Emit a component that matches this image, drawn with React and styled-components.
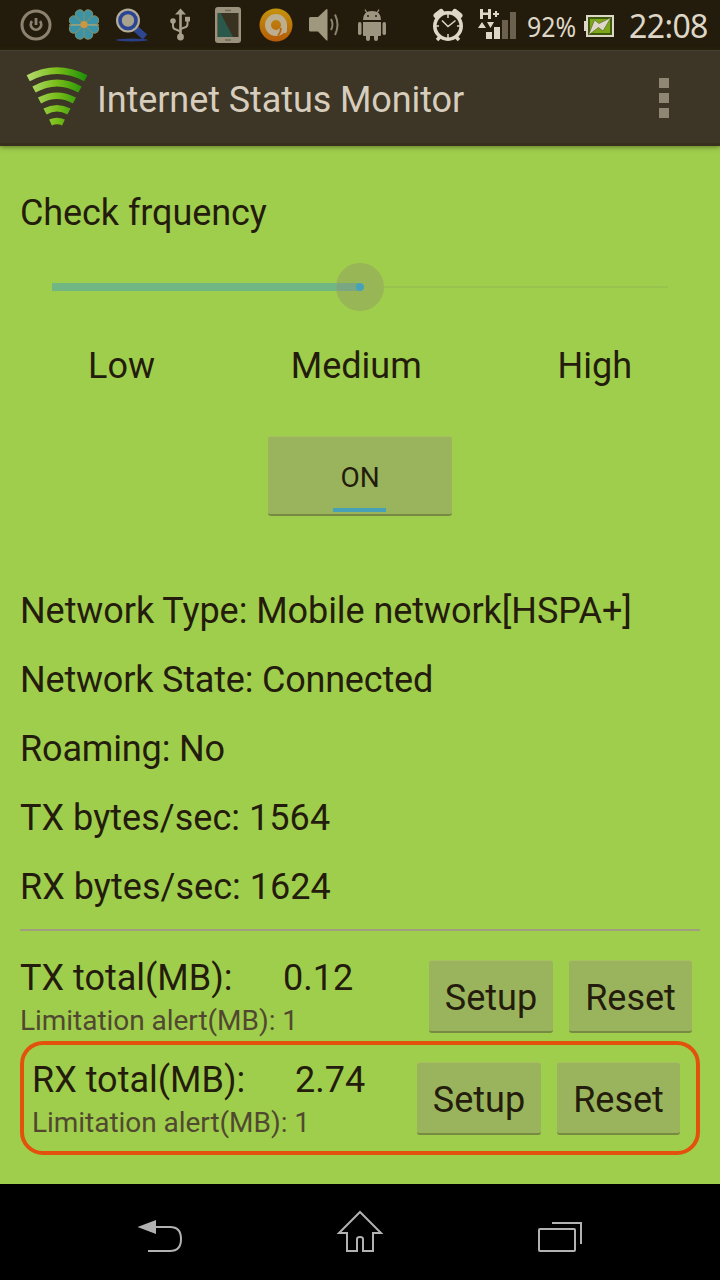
import React from 'react'
import styled, { createGlobalStyle } from 'styled-components'

const GlobalStyle = createGlobalStyle`
  * {
    box-sizing: border-box;
  }
  body {
    margin: 0;
    background: #9fce4d;
    font-family: Roboto, "Liberation Sans", sans-serif;
  }
`
const Screen = styled.div`
  display: flex;
  flex-direction: column;
  width: 720px;
  height: 1280px;
  overflow: hidden;
  background: #9fce4d;
  color: #241c0c;
`
const StatusBar = styled.header`
  display: flex;
  align-items: center;
  height: 50px;
  padding-left: 12px;
  background: #231c0c;
  color: #ded6c6;
`
const StatusSlot = styled.div`
  display: flex;
  justify-content: center;
  width: 48px;
`
const StatusRight = styled.div`
  display: flex;
  align-items: center;
  margin-left: 36px;
  font-family: "Noto Sans", "Open Sans", sans-serif;
`
const Signal = styled.svg`
  margin-left: 14px;
  margin-bottom: 2px;
`
const Percent = styled.span`
  width: 57px;
  margin-left: 10px;
  margin-top: 1px;
  font-size: 28px;
  line-height: 40px;
  transform: scaleX(0.89);
  transform-origin: left center;
`
const Battery = styled.svg`
  margin-top: 2px;
`
const Clock = styled.span`
  margin-left: 14px;
  margin-top: 1px;
  font-size: 32px;
  line-height: 40px;
  letter-spacing: -0.6px;
`
const ActionBar = styled.div`
  display: flex;
  align-items: center;
  height: 96px;
  padding: 0 51px 0 25px;
  background: #3d3525;
  border-top: 1px solid #474030;
  border-bottom: 3px solid #382f1d;
  box-shadow: 0 1px 5px rgba(50, 60, 10, 0.6);
`
const Title = styled.h1`
  flex: 1;
  margin: 6px 0 0 8px;
  font-size: 36px;
  font-weight: 400;
  line-height: 44px;
  letter-spacing: -0.08px;
  color: #d7cdbd;
`
const Overflow = styled.div`
  display: grid;
  gap: 5px;
  margin-top: 2px;
`
const OverflowDot = styled.i`
  width: 10px;
  height: 10px;
  background: #8f8674;
`
const Content = styled.main`
  flex: 1;
  padding: 45px 20px 0;
`
const Text = styled.div`
  font-size: 36px;
  line-height: 44px;
  letter-spacing: ${(props) => props.$spacing || 0}px;
  white-space: pre;
`
const Slider = styled.div`
  display: flex;
  align-items: center;
  height: 48px;
  margin: 28px 32px 0;
`
const SliderFill = styled.div`
  width: 284px;
  height: 8px;
  background: #70b784;
`
const SliderThumb = styled.div`
  display: flex;
  align-items: center;
  width: 48px;
  height: 48px;
  border-radius: 50%;
  background: linear-gradient(#7aa783, #7aa783) left center / 24px 8px no-repeat, #98b656;
`
const SliderDot = styled.i`
  width: 8px;
  height: 8px;
  margin-left: 20px;
  border-radius: 50%;
  background: #47a2b8;
`
const SliderRest = styled.div`
  flex: 1;
  height: 2px;
  background: #98c34e;
`
const Levels = styled.div`
  display: flex;
  justify-content: space-between;
  margin: 33px 68px 0 68px;
`
const Button = styled.button`
  width: ${(props) => props.width}px;
  height: 73px;
  padding: 4px 0 0;
  border: 0;
  border-top: 1px solid #a9c062;
  border-bottom: 2px solid #788a42;
  border-radius: 3px;
  background: #9ab45d;
  color: inherit;
  font-family: inherit;
  font-size: 36px;
`
const Toggle = styled(Button)`
  display: flex;
  flex-direction: column;
  align-items: center;
  height: 80px;
  margin: 48px auto 0;
  padding: 25px 0 0;
  font-size: 28px;
  line-height: 32px;
`
const ToggleLight = styled.i`
  width: 53px;
  height: 4px;
  margin: 14px 1px 0 0;
  background: #47a2b8;
`
const Readings = styled.div`
  display: grid;
  gap: 25px;
  margin-top: 73px;
`
const Divider = styled.hr`
  height: 2px;
  margin: 20px 0 0;
  border: 0;
  background: #a09d80;
`
const TotalRow = styled.section`
  display: flex;
  justify-content: space-between;
  height: ${(props) => (props.$alert ? 114 : 110)}px;
  padding: ${(props) => (props.$alert ? '13px 16px 0 8px' : '25px 8px 0 0')};
  border: ${(props) => (props.$alert ? '4px solid #e2520c' : '0')};
  border-radius: ${(props) => (props.$alert ? 23 : 0)}px;
`
const Total = styled.div`
  display: flex;
`
const TotalLabel = styled(Text)`
  width: 263px;
`
const TotalInfo = styled.div``
const Limit = styled.div`
  margin-top: 4px;
  font-size: 28px;
  line-height: 34px;
  letter-spacing: -0.04px;
  color: #51492f;
`
const Buttons = styled.div`
  display: flex;
  gap: 16px;
  margin-top: 4px;
`
const NavBar = styled.nav`
  display: flex;
  align-items: center;
  justify-content: space-between;
  height: 96px;
  padding: 0 136px;
  background: #000;
`

const readings = [
  { label: 'Network Type: Mobile network[HSPA+]', spacing: -0.06 },
  { label: 'Network State: Connected', spacing: -0.19 },
  { label: 'Roaming: No', spacing: -0.15 },
  { label: 'TX bytes/sec: 1564', spacing: 0.04 },
  { label: 'RX bytes/sec: 1624', spacing: 0.04 },
]

const petals = [22.5, 67.5, 112.5, 157.5, 202.5, 247.5, 292.5, 337.5]

function StatusIcons() {
  return (
    <>
      <StatusSlot>
        <svg width="36" height="36" viewBox="0 0 36 36" fill="none" stroke="#8d826f">
          <circle cx="18" cy="18" r="14" strokeWidth="3" />
          <path d="M14 14.2a5.2 5.2 0 1 0 8 0M18 11v7" strokeWidth="2.8" />
        </svg>
      </StatusSlot>
      <StatusSlot>
        <svg width="36" height="36" viewBox="0 0 36 36">
          {petals.map((angle) => (
            <path
              key={angle}
              d="M18 17L13.700 7.500Q13 2.500 18 2Q23 2.500 22.300 7.500Z"
              fill="#3b93a8"
              stroke="#7f9068"
              strokeWidth="1"
              transform={`rotate(${angle} 18 17.500)`}
            />
          ))}
          <path d="M3 18H33" stroke="#a3a780" strokeWidth="1.300" />
          <circle cx="18" cy="17.500" r="3.600" fill="#cf9640" />
        </svg>
      </StatusSlot>
      <StatusSlot>
        <svg width="36" height="36" viewBox="0 0 36 36">
          <ellipse cx="18" cy="33" rx="16" ry="1.5" fill="#293f8a" />
          <path d="M22 22L31 30" stroke="#2d468f" strokeWidth="6.5" />
          <circle cx="14" cy="13.5" r="11" fill="#a39a84" stroke="#b5ad98" strokeWidth="2" />
          <circle cx="14" cy="13.5" r="8" fill="#aaa28d" stroke="#2b4596" strokeWidth="3.6" />
        </svg>
      </StatusSlot>
      <StatusSlot>
        <svg width="36" height="36" viewBox="0 0 36 36" fill="none" stroke="#a79f8b" strokeWidth="2">
          <path d="M18.500 6V30" strokeWidth="2.6" />
          <path d="M11 14V19Q11 22 14 22.500L18.500 24.500M25.500 12V17Q25.500 20 22.500 20.500L18.500 22" />
          <path d="M18.500 1.500L24 7.500H13Z" fill="#a79f8b" stroke="none" />
          <circle cx="18.500" cy="30" r="3.400" fill="#a79f8b" stroke="none" />
          <circle cx="11" cy="14" r="2.800" fill="#a79f8b" stroke="none" />
          <path d="M23 9.800H28V14.500H23Z" fill="#a79f8b" stroke="none" />
        </svg>
      </StatusSlot>
      <StatusSlot>
        <svg width="36" height="36" viewBox="0 0 36 36">
          <rect x="5" y="0" width="26" height="36" rx="3" fill="#9b927e" />
          <rect x="7.500" y="6" width="21" height="24" fill="#3a3221" />
          <path d="M8 6H10.500L23 30H8Z" fill="#2a594c" />
          <path d="M15 3.500H21M15 33H21" stroke="#6f6857" strokeWidth="1.500" />
        </svg>
      </StatusSlot>
      <StatusSlot>
        <svg width="36" height="36" viewBox="0 0 36 36">
          <defs>
            <linearGradient id="orange" x1="0" y1="0" x2="0" y2="1">
              <stop offset="0" stopColor="#c4930d" />
              <stop offset="1" stopColor="#b65b09" />
            </linearGradient>
          </defs>
          <circle cx="18" cy="18" r="16.500" fill="url(#orange)" />
          <circle cx="18" cy="18" r="8" fill="none" stroke="#bcae91" strokeWidth="6" />
          <path d="M23 18H29V24Q29 26.500 26 26Q23 25.500 23 23Z" fill="#bcae91" />
          <path d="M23 21Q23 25 20 28.500" fill="none" stroke="#b8650a" strokeWidth="1.800" />
        </svg>
      </StatusSlot>
      <StatusSlot>
        <svg width="36" height="36" viewBox="0 0 36 36">
          <path d="M4.500 10H12L20 2.500Q21.500 1.500 21.500 3V33Q21.500 34.500 20 33L12 24.500H4.500Q3 24.500 3 23V11.500Q3 10 4.500 10Z" fill="#a0977f" />
          <path d="M25 12Q28 17.500 25 23M29 7.500Q34 17.500 29 28" fill="none" stroke="#8d8470" strokeWidth="2" />
        </svg>
      </StatusSlot>
      <StatusSlot>
        <svg width="36" height="36" viewBox="0 0 36 36" fill="#9e9580">
          <path d="M9 13Q9 4 18 4Q27 4 27 13Z" />
          <path d="M9 15H27V28Q27 29 26 29H24V32Q24 34 22 34T20 32V29H16V32Q16 34 14 34T12 32V29H10Q9 29 9 28Z" />
          <rect x="4" y="15" width="3.500" height="13" rx="1.700" />
          <rect x="28.500" y="15" width="3.500" height="13" rx="1.700" />
          <path d="M13 6L11 2.500M23 6L25 2.500" stroke="#9e9580" strokeWidth="1.300" />
          <circle cx="14" cy="9" r="1" fill="#231c0c" />
          <circle cx="22" cy="9" r="1" fill="#231c0c" />
        </svg>
      </StatusSlot>
    </>
  )
}

function SystemStatus() {
  return (
    <StatusRight>
      <svg width="32" height="36" viewBox="0 0 32 36" fill="none" stroke="#ded6c6">
        <path d="M4.500 8.500L9 5M27.500 8.500L23 5" strokeWidth="6" strokeLinecap="round" />
        <path d="M8 30L5 33M24 30L27 33" strokeWidth="3.500" />
        <circle cx="16" cy="19" r="13.200" fill="#231c0c" strokeWidth="3.600" />
        <path d="M10 13.500L16 19.500L23.500 13.500M16 7V11M16 27V31M4 19H7M25 19H28" strokeWidth="1.500" />
      </svg>
      <Signal width="39" height="34" viewBox="0 0 39 34" fill="#ded6c6">
        <path d="M2 2H5V5.500H10V2H13V12H10V8H5V12H2ZM15 6H17V4H19V6H21V8H19V10H17V8H15Z" />
        <path d="M0 21L4 15L8 21ZM9 15H16L12.500 21Z" />
        <path d="M8 25H14V32H8ZM16 20H22V32H16Z" />
        <path d="M24 13H30V32H24ZM32 5H38V32H32Z" fill="#6b614e" />
      </Signal>
      <Percent>92%</Percent>
      <Battery width="31" height="24" viewBox="0 0 31 24">
        <path d="M2 1H30V23H2V17H0V7H2Z" fill="#ded6c6" />
        <path d="M4 3H28V21H4Z" fill="#3d590b" />
        <path d="M6 5H26V19H6Z" fill="#7da719" />
        <path d="M4.500 21L10.500 6L15 9.500L27 3.500L19 17L14.500 13.500Z" fill="#ded6c6" stroke="#3d4a16" strokeWidth="0.500" />
      </Battery>
      <Clock>22:08</Clock>
    </StatusRight>
  )
}

function AppLogo() {
  return (
    <svg width="64" height="62" viewBox="0 0 64 62" fill="none" stroke="url(#green)">
      <defs>
        <linearGradient id="green" gradientUnits="userSpaceOnUse" x1="4" y1="0" x2="60" y2="0">
          <stop offset="0" stopColor="#b1d96b" />
          <stop offset="0.500" stopColor="#79bd19" />
          <stop offset="1" stopColor="#219209" />
        </linearGradient>
      </defs>
      <path d="M3.200 12.200Q32 -3 60.800 12.200" strokeWidth="6.800" />
      <path d="M9 23.500Q32 10.500 55 23.500" strokeWidth="6.800" />
      <path d="M14.500 34.500Q32 25 49.500 34.500" strokeWidth="6.600" />
      <path d="M20 45.500Q32 39 44 45.500" strokeWidth="6.600" />
      <path d="M25.500 56.500Q32 53.500 38.500 56.500" strokeWidth="6.600" />
    </svg>
  )
}

function TotalItem(props) {
  return (
    <TotalRow $alert={props.alert}>
      <TotalInfo>
        <Total>
          <TotalLabel>{props.label}</TotalLabel>
          <Text>{props.value}</Text>
        </Total>
        <Limit>Limitation alert(MB): 1</Limit>
      </TotalInfo>
      <Buttons>
        <Button width={124}>Setup</Button>
        <Button width={123}>Reset</Button>
      </Buttons>
    </TotalRow>
  )
}

function App() {
  return (
    <Screen>
      <GlobalStyle />
      <StatusBar>
        <StatusIcons />
        <SystemStatus />
      </StatusBar>
      <ActionBar>
        <AppLogo />
        <Title>Internet Status Monitor</Title>
        <Overflow>
          <OverflowDot />
          <OverflowDot />
          <OverflowDot />
        </Overflow>
      </ActionBar>
      <Content>
        <Text $spacing={-0.08}>Check frquency</Text>
        <Slider>
          <SliderFill />
          <SliderThumb>
            <SliderDot />
          </SliderThumb>
          <SliderRest />
        </Slider>
        <Levels>
          <Text>Low</Text>
          <Text>Medium</Text>
          <Text>High</Text>
        </Levels>
        <Toggle width={184}>
          ON
          <ToggleLight />
        </Toggle>
        <Readings>
          {readings.map((reading) => (
            <Text key={reading.label} $spacing={reading.spacing}>
              {reading.label}
            </Text>
          ))}
        </Readings>
        <Divider />
        <TotalItem label="TX total(MB):" value="0.12" />
        <TotalItem label="RX total(MB):" value="2.74" alert />
      </Content>
      <NavBar>
        <svg width="48" height="48" viewBox="0 0 48 48" fill="none" stroke="#b2b2b2" strokeWidth="2">
          <path d="M18 19H34Q45 19 45 31T34 43H12" />
          <path d="M1.500 19L20 12V26Z" fill="#b2b2b2" stroke="none" />
        </svg>
        <svg width="48" height="48" viewBox="0 0 48 48" fill="none" stroke="#b2b2b2" strokeWidth="2">
          <path d="M24 4L45 25H37V43H27V31Q27 29 24 29T21 31V43H11V25H3Z" />
        </svg>
        <svg width="48" height="48" viewBox="0 0 48 48" fill="none" stroke="#b2b2b2" strokeWidth="2">
          <rect x="3" y="21" width="36" height="22" rx="1" />
          <path d="M16 15H45V36" />
        </svg>
      </NavBar>
    </Screen>
  )
}

export default App
